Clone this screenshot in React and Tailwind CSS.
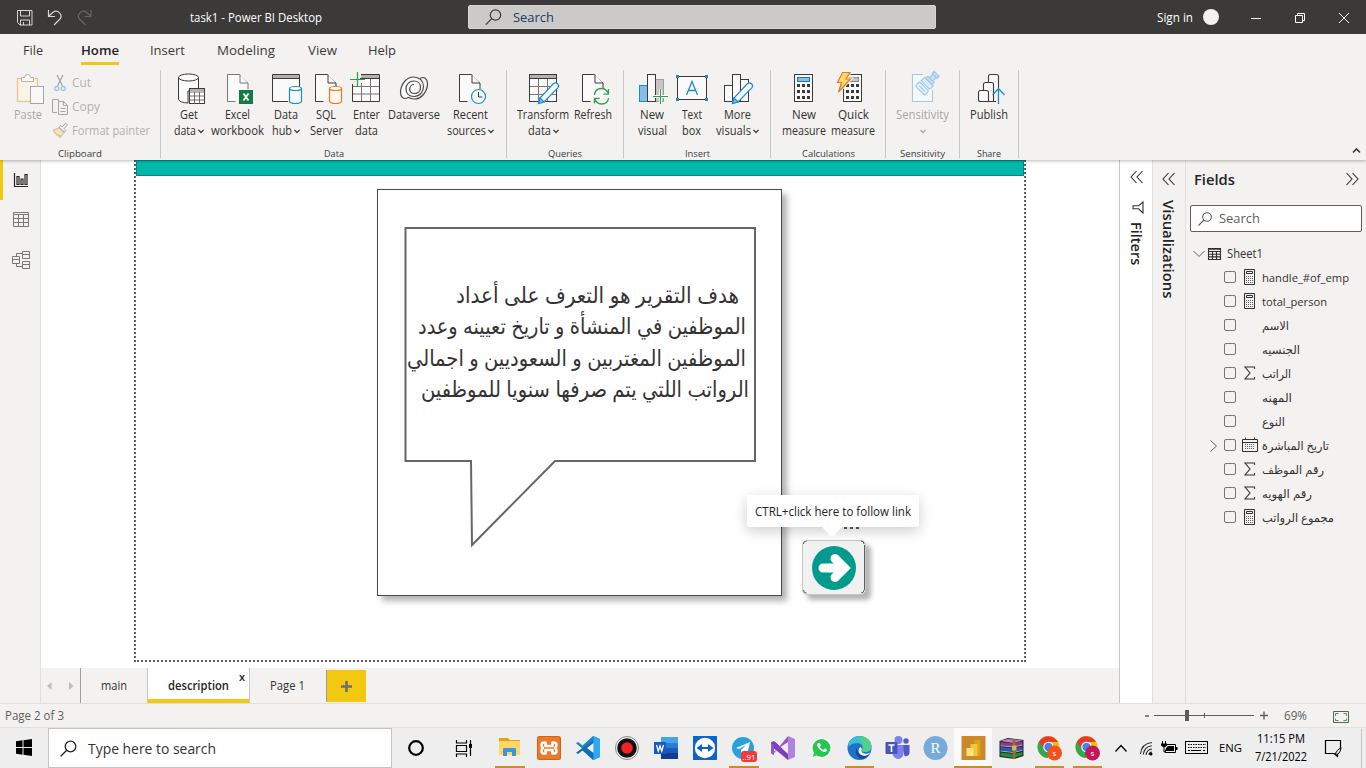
import { useLayoutEffect, useRef, useState } from "react";

/* Text squeezed or stretched to a given length in pixels. */
function Fit({ w, children, className = "", vertical = false, rtl = false }) {
  const ref = useRef(null);
  const [k, setK] = useState(1);
  useLayoutEffect(() => {
    const n = vertical ? ref.current.offsetHeight : ref.current.getBoundingClientRect().width;
    if (n) setK(w / n);
  }, []);
  if (vertical) {
    return (
      <span className={"block " + className} style={{ height: w }}>
        <span ref={ref} className="inline-block origin-top whitespace-nowrap [writing-mode:vertical-rl]" style={{ transform: `scaleY(${k})` }}>{children}</span>
      </span>
    );
  }
  return (
    <span className={"block shrink-0 " + className} style={{ width: w }}>
      <span ref={ref} dir={rtl ? "rtl" : "ltr"} className="inline-block origin-left whitespace-pre" style={{ transform: `scaleX(${k})` }}>{children}</span>
    </span>
  );
}

function Svg({ box, className = "", children }) {
  const [x, y, w, h] = box;
  return (
    <svg viewBox={`${x} ${y} ${w} ${h}`} width={w} height={h} className={"block shrink-0 overflow-visible " + className} fill="none" strokeLinecap="butt">
      {children}
    </svg>
  );
}

const Down = ({ c = "#3b3a39" }) => (
  <Svg box={[0, 0, 6, 5]} className="mt-[1px]"><path d="M.4 .9 3 3.500 5.600 .9" stroke={c} strokeWidth="1.300" /></Svg>
);

/* One large ribbon button; x is the left edge its drawing is laid out from. */
function Big({ x, w, l1, w1, l2, w2, arrow, dim, children }) {
  return (
    <div className={"flex shrink-0 flex-col items-center pt-[3px] " + (dim ? "text-[#a8a6a4]" : "text-[#323130]")} style={{ width: w }}>
      <Svg box={[x, 70, w, 36]}>{children}</Svg>
      <div className="flex h-4 w-0 items-center justify-center text-[12px] leading-4 mt-[1px]"><Fit w={w1}>{l1}</Fit></div>
      <div className="flex h-4 w-0 items-center justify-center gap-[2px] text-[12px] leading-4">
        {l2 && <Fit w={w2}>{l2}</Fit>}
        {arrow && <Down c={dim ? "#a8a6a4" : "#3b3a39"} />}
      </div>
    </div>
  );
}

function Group({ w, pl, label, lw, children }) {
  return (
    <div className="flex shrink-0 flex-col" style={{ width: w }}>
      <div className="flex h-[80px]" style={{ paddingLeft: pl }}>{children}</div>
      <div className="flex h-[13px] justify-center text-[9.7px] leading-[14px] text-[#3b3a39]"><Fit w={lw}>{label}</Fit></div>
    </div>
  );
}
const Sep = () => <div className="mt-[3px] h-[88px] w-px shrink-0 bg-[#c8c6c4]" />;

const D = "#3b3a39";
const B = "#1e8bcd";

const Page = ({ x, c = D }) => (
  <g stroke={c} fill="#fafafa"><path d={`M${x + 8} 101.5H${x}V74.5h12l8.5 8.5v6`} /><path d={`M${x + 12.5} 74.5V83h8`} /></g>
);
const Pencil = ({ x, y }) => (
  <g stroke={B} strokeWidth="1.2"><path d={`M${x} ${y}l1.5-5.5L${x + 15} ${y - 20}q2-1.5 4 .3t.3 4L${x + 5.5} ${y - 1.5}z`} fill="#f8fbfd" /><path d={`M${x} ${y}l1.5-5.5 4 4z`} fill="#83beec" /></g>
);
const Calc = ({ x }) => (
  <g>
    <rect x={x + 0.5} y="74.5" width="18" height="27" fill="#fafafa" stroke={D} />
    {[84, 90, 96].map((y) => [3, 8, 13].map((d) => <rect key={y + "-" + d} x={x + d} y={y} width="3" height="3" fill={D} />))}
  </g>
);

function TitleBar() {
  return (
    <div className="flex h-[34px] shrink-0 items-center bg-[#3b3a39] text-white">
      <Svg box={[0, 0, 190, 34]}>
        <g stroke="#d8d6d4">
          <path d="M17.500 10.500h14.500v14.500h-12l-2.500-2.500zM20.500 10.500v5.500h9v-5.500M20.500 25v-5h9v5M23.500 25v-3" />
          <path d="M48.500 10v6.500h6.500M48.700 16.300l4.300-4q3.500-2.500 6.500.5t.5 6.200l-6 6" strokeWidth="1.200" />
          <path d="M91 10v6.500h-6.500M90.800 16.300l-4.300-4q-3.500-2.500-6.500.5t-.5 6.200l6 6" strokeWidth="1.200" stroke="#686664" />
        </g>
      </Svg>
      <Fit w={132} className="pt-[2px] text-[12px]">task1 - Power BI Desktop</Fit>
      <div className="ml-[146px] flex h-6 w-[468px] shrink-0 items-center rounded-[2px] border border-[#d8d6d4] bg-[#cbcac8] pl-4">
        <Svg box={[0, 0, 17, 17]}><circle cx="10.500" cy="6" r="5.200" stroke="#3b3a39" strokeWidth="1.200" /><path d="M6.800 9.700.8 15.700" stroke="#3b3a39" strokeWidth="1.200" /></Svg>
        <Fit w={41} className="ml-[11px] text-[13.500px] leading-5 text-[#243a5e]">Search</Fit>
      </div>
      <Fit w={36} className="ml-[221px] pt-[2px] text-[12px]">Sign in</Fit>
      <div className="ml-[10px] size-4 shrink-0 rounded-full bg-[#f3f2f1]" />
      <Svg box={[1219, 0, 147, 34]}>
        <path d="M1251 18.500h10M1295.500 15.500h7v7h-7zM1297.500 15.500v-2h7v7h-2M1339 13l10 10M1349 13l-10 10" stroke="#fff" />
      </Svg>
    </div>
  );
}

function Menu() {
  const items = [["File", 20, 23], ["Home", 38, 38], ["Insert", 35, 31], ["Modeling", 58, 32], ["View", 29, 33], ["Help", 28, 31]];
  return (
    <div className="relative z-20 flex h-[33px] shrink-0 bg-[#f3f2f1] text-[13.300px] text-[#3b3a39]">
      {items.map(([t, w, ml]) => (
        <div key={t} className={"flex h-[31px] flex-col pt-[6px] leading-5 " + (t === "Home" ? "border-b-[3px] border-[#f2c811] font-semibold text-[#252423]" : "")} style={{ marginLeft: ml }}>
          <Fit w={w}>{t}</Fit>
        </div>
      ))}
    </div>
  );
}

function Ribbon() {
  return (
    <div className="relative z-10 flex h-[93px] shrink-0 bg-[#f3f2f1] shadow-[0_1px_3px_rgba(0,0,0,0.28)]">
      <Group w={160} pl={10} label="Clipboard" lw={44}>
        <Big x={10} w={36} l1="Paste" w1={28} dim>
          <rect x="17.500" y="78.500" width="20" height="23" fill="#faf3e6" stroke="#ecc793" strokeWidth="1.400" />
          <path d="M21.500 81.500v-4h3q0-3 3-3t3 3h3v4z" fill="#f8f8f8" stroke="#b3b1af" />
          <rect x="30.500" y="86.500" width="13" height="17" fill="#f8f8f8" stroke="#a8a6a4" />
        </Big>
        <div className="ml-[6px] flex flex-col pt-1 text-[12px] text-[#b3b1af]">
          <div className="flex h-6 items-center gap-1"><Svg box={[52, 74, 16, 16]}><path d="M57 74l5.500 11M63 74l-5.500 11" stroke="#a8a6a4" strokeWidth="1.300" /><circle cx="56.800" cy="87.500" r="2" stroke="#9cc6e2" strokeWidth="1.300" /><circle cx="63.200" cy="87.500" r="2" stroke="#9cc6e2" strokeWidth="1.300" /></Svg><Fit w={19}>Cut</Fit></div>
          <div className="flex h-6 items-center gap-1"><Svg box={[52, 98, 16, 16]}><path d="M57 111.500h-4.500v-13h6v2M58.500 100.500h5l4 4v9h-9zM63.500 100.500v4h4M60.500 107.500h5M60.500 110.500h5" stroke="#a8a6a4" /></Svg><Fit w={28}>Copy</Fit></div>
          <div className="flex h-6 items-center gap-1"><Svg box={[52, 122, 16, 16]}><path d="M53 129l6-2 5 4.500-4 5.500z" fill="#f6dfc4" stroke="#e3b78b" /><path d="M53 129l3 4.500 5 1.500" stroke="#e3b78b" /><path d="M59 126.500l5.500 5 1.300-2-1.800-1.800 3.500-3.700-1.700-1.700-3.800 3.500-1.500-1.300z" fill="#eee" stroke="#a8a6a4" /></Svg><Fit w={78}>Format painter</Fit></div>
        </div>
      </Group>
      <Sep />
      <Group w={345} pl={4} label="Data" lw={20}>
        <Big x={165} w={47} l1="Get" w1={18} l2="data" w2={22} arrow>
          <path d="M178.500 77.500v22q1 3 9.500 3.500V91h10.500V77.500" fill="#fafafa" stroke={D} />
          <ellipse cx="188.500" cy="77.500" rx="10" ry="3.500" fill="#fafafa" stroke={D} />
          <rect x="189.500" y="88.500" width="15" height="15" fill="#fff" stroke={D} /><path d="M190 90h14" stroke="#b3b1af" strokeWidth="2" /><path d="M189 92h16M189 96h16M189 100h16M194.500 92v12M199.500 92v12" stroke="#605e5c" strokeWidth=".9" />
        </Big>
        <Big x={212} w={51} l1="Excel" w1={25} l2="workbook" w2={53}>
          <Page x={227.5} c="#797775" /><rect x="239" y="90" width="14" height="14" fill="#107c41" />
          <path d="M243.500 93.500l5 7M248.500 93.500l-5 7" stroke="#fff" strokeWidth="1.800" />
        </Big>
        <Big x={263} w={45} l1="Data" w1={24} l2="hub" w2={20} arrow>
          <path d="M288 101.500h-15.500v-27h27V87" fill="#fafafa" stroke={D} /><path d="M273 76.500h26" stroke="#b3b1af" strokeWidth="3" /><path d="M272 78.500h28" stroke={D} />
          <path d="M289.500 88.500v13q1 2 6 2t6-2v-13" fill="#f4faff" stroke={B} strokeWidth="1.200" /><ellipse cx="295.500" cy="88.500" rx="6" ry="2" fill="#fff" stroke={B} strokeWidth="1.200" />
        </Big>
        <Big x={308} w={36} l1="SQL" w1={20} l2="Server" w2={33}>
          <Page x={315.5} /><path d="M329.500 88.500v13q1 2 6 2t6-2v-13" fill="#fff8f1" stroke="#e07b1c" strokeWidth="1.200" /><ellipse cx="335.500" cy="88.500" rx="6" ry="2" fill="#fff" stroke="#e07b1c" strokeWidth="1.200" />
        </Big>
        <Big x={344} w={44} l1="Enter" w1={27} l2="data" w2={23}>
          <path d="M352.500 84v17.500h27v-27H352.500z" fill="#fafafa" /><path d="M350 72h11v14h-11z" fill="#f3f2f1" /><path d="M361 76.500h18" stroke="#b3b1af" strokeWidth="3" />
          <path d="M352.500 84v17.500h27v-27H361M360 78.500h19" stroke={D} /><path d="M353 86.500h26M353 94h26M361.500 83v18M370.500 79v22" stroke="#797775" />
          <path d="M357.500 72v15M350 79.500h15" stroke="#2f9e4f" strokeWidth="1.200" />
        </Big>
        <Big x={388} w={52} l1="Dataverse" w1={52}>
          <g stroke="#4a4846" strokeWidth="1.200">
            <path d="M408 97.500c-4 2.500-7.500 0-7.500-5 0-8 6-15.500 13-15.500 6 0 10 4 10 9.500 0 5-3.500 10-9.500 10-5 0-8-3-8-7.500 0-5 3.500-8 8-8 4 0 6.500 2.700 6.500 6.500 0 3.500-2.500 6-6 6-3 0-4.800-2-4.800-4.500s2-4.500 4.300-4.500" fill="#fafafa" />
            <path d="M420 78.500c4-2.500 7.500 0 7.500 5 0 8-6 15.500-13 15.500-2.500 0-4.800-.6-6.500-1.700" />
          </g>
        </Big>
        <Big x={440} w={60} l1="Recent" w1={35} l2="sources" w2={39} arrow>
          <Page x={459.5} /><circle cx="478.500" cy="96.500" r="7" fill="#fafdff" stroke={B} strokeWidth="1.200" /><path d="M478.500 92v5h4" stroke={D} />
        </Big>
      </Group>
      <Sep />
      <Group w={116} pl={8} label="Queries" lw={34}>
        <Big x={515} w={56} l1="Transform" w1={52} l2="data" w2={23} arrow>
          <rect x="529.500" y="74.500" width="27" height="27" fill="#fafafa" stroke={D} /><path d="M530 76.500h26" stroke="#b3b1af" strokeWidth="3" /><path d="M529 78.500h28" stroke={D} /><path d="M530 86.500h26M530 94.500h26M538.500 79v22M547.500 79v22" stroke="#797775" />
          <Pencil x={538.5} y={103.5} />
        </Big>
        <Big x={571} w={44} l1="Refresh" w1={38}>
          <Page x={582.5} /><path d="M594 88h16v16h-16z" fill="#f8f8f8" /><path d="M594.500 95q.5-6.500 7-6.500 5 0 7 5.500M608.500 89v5.200h-5.200M608.500 98q-.5 6-7 6-5 0-7-5.500M594.500 103.500v-5.200h5.200" stroke="#2f9e4f" strokeWidth="1.300" />
        </Big>
      </Group>
      <Sep />
      <Group w={146} pl={9} label="Insert" lw={25}>
        <Big x={633} w={38} l1="New" w1={24} l2="visual" w2={29}>
          <rect x="639.500" y="85.500" width="8" height="16" fill="#83beec" stroke={B} /><rect x="655.500" y="79.500" width="8" height="22" fill="#c8c6c4" stroke="#a19f9d" /><rect x="647.500" y="74.500" width="8" height="27" fill="#fafafa" stroke={D} />
          <path d="M660.500 89v15M653 96.500h15" stroke="#fff" strokeWidth="3" /><path d="M660.500 89v15M653 96.500h15" stroke="#2f9e4f" strokeWidth="1.200" />
        </Big>
        <Big x={671} w={41} l1="Text" w1={20} l2="box" w2={19}>
          <rect x="677.500" y="76.500" width="29" height="23" fill="#fafafa" stroke={D} />
          {[[676, 75], [705, 75], [676, 98], [705, 98]].map(([x, y]) => <rect key={x + "-" + y} x={x} y={y} width="3" height="3" fill={B} />)}
          <path d="M686.500 95l5.500-13.500 5.500 13.500M688.300 90.500h7.400" stroke={B} strokeWidth="1.300" />
        </Big>
        <Big x={712} w={50} l1="More" w1={27} l2="visuals" w2={35} arrow>
          <rect x="724.500" y="85.500" width="8" height="16" fill="#fafafa" stroke={D} /><rect x="740.500" y="79.500" width="8" height="22" fill="#fafafa" stroke={D} /><rect x="732.500" y="74.500" width="8" height="27" fill="#fafafa" stroke={D} /><Pencil x={732.5} y={103.5} />
        </Big>
      </Group>
      <Sep />
      <Group w={114} pl={8} label="Calculations" lw={53}>
        <Big x={779} w={50} l1="New" w1={24} l2="measure" w2={44}>
          <Calc x={794} /><rect x="797.500" y="77.500" width="12" height="4" fill="#83beec" stroke="#1a73b5" />
        </Big>
        <Big x={829} w={48} l1="Quick" w1={31} l2="measure" w2={44}>
          <Calc x={843} /><rect x="848.500" y="77.500" width="10" height="4" fill="#c8c6c4" stroke="#8a8886" />
          <path d="M842.500 72.500h7.500l-4 6.500h4.500l-12 13 3-9.500h-4z" fill="#fcd778" stroke="#f3f2f1" strokeWidth="3" />
          <path d="M842.500 72.500h7.500l-4 6.500h4.500l-12 13 3-9.500h-4z" fill="#fcd778" stroke="#e07b1c" strokeWidth="1.200" />
        </Big>
      </Group>
      <Sep />
      <Group w={73} pl={8} label="Sensitivity" lw={45}>
        <Big x={894} w={57} l1="Sensitivity" w1={53} arrow dim>
          <g stroke="#a0c9e2" strokeWidth="1.100">
            <path d="M923 74.500h-10.500v27h20V90" fill="#f5f8fa" />
            <g transform="rotate(-45 922 88.500)"><rect x="919" y="82" width="6" height="13" rx="1" fill="#e7f1f8" /><path d="M922 84.500v8" /></g>
            <g transform="rotate(45 930 80.500)"><path d="M924 82h12v5h-12z" fill="#dcebf5" /><path d="M925.500 79h9v3h-9zM927.500 79v-5h5v5M926.500 71h7v3h-7z" fill="#c6dff0" /></g>
          </g>
        </Big>
      </Group>
      <Sep />
      <Group w={58} pl={4} label="Share" lw={24}>
        <Big x={964} w={50} l1="Publish" w1={38}>
          <g fill="#fafafa" stroke={D} strokeWidth="1.100"><path d="M988.500 101.500v-25q0-2 2-2h6q2 0 2 2V88" /><path d="M983.500 101.500v-17q0-2 2-2h6q2 0 2 2v17z" /><path d="M978.500 99.500v-7q0-2 2-2h6q2 0 2 2v9h-8q-2 0-2-2zM988 101.500h8" /></g>
          <path d="M998.500 104V89M992.500 95l6-6.500 6 6.500" stroke={B} strokeWidth="1.300" />
        </Big>
      </Group>
      <Sep />
      <Svg box={[1019, 67, 347, 93]}><path d="M1353 152.500l3.500-3.500 3.500 3.500" stroke={D} strokeWidth="1.700" /></Svg>
    </div>
  );
}

function Rail() {
  return (
    <div className="flex w-[41px] shrink-0 border-r border-[#e1dfdd] bg-[#f3f2f1]">
      <div className="h-10 w-[3px] shrink-0 bg-[#f2c811]" />
      <Svg box={[3, 160, 37, 140]}>
        <path d="M14.500 173v13.500H28M17 176.500h2v8h-2zM21 179h2v5.500h-2zM25 174.500h2v10h-2z" stroke="#252423" strokeWidth="1.200" />
        <path d="M13.500 212.500h15v14h-15zM13 214.500h16M13 218.500h16M13 222.500h16M18.500 214v12M23.500 214v12" stroke="#797775" />
        <path d="M12.500 256.500h7v7h-7zM12 259.500h8M22.500 251.500h7v7h-7zM22 254.500h8M22.500 261.500h7v7h-7zM22 264.500h8M16.500 256v-2.500h6M16.500 264v2.500h6" stroke="#797775" />
      </Svg>
    </div>
  );
}

const lines = [
  ["هدف التقرير هو التعرف على أعداد", 283, 79],
  ["الموظفين في المنشأة و تاريخ تعيينه وعدد", 328, 41],
  ["الموظفين المغتربين و السعوديين و اجمالي", 339, 30],
  ["الرواتب اللتي يتم صرفها سنويا للموظفين", 328, 44],
];

function Canvas() {
  return (
    <div className="relative h-[508px] shrink-0 overflow-hidden bg-white">
      <div className="ml-[93px] -mt-4 h-[518px] w-[892px] border-2 border-dotted border-[#605e5c]">
        <div className="mt-[14px] h-4 border border-[#018a80] bg-[#01b8aa]" />
      </div>
      <div className="absolute left-[336px] top-[29px] h-[407px] w-[405px] border border-[#4a4846] bg-white shadow-[5px_5px_6px_rgba(0,0,0,0.3)]">
        <Svg box={[378, 190, 403, 405]} className="absolute left-0 top-0">
          <path d="M405.500 228H755v233H555l-83 84-1-84h-65.500z" stroke="#666" strokeWidth="2" />
        </Svg>
        <div className="relative pt-[90px] text-[22px] leading-[31.300px] text-[#333] font-[Liberation_Sans,DejaVu_Sans,sans-serif]">
          {lines.map(([t, w, ml]) => (
            <div key={t} className="h-[31.3px]" style={{ marginLeft: ml - 1 }}><Fit w={w} rtl>{t}</Fit></div>
          ))}
        </div>
      </div>
      <div className="absolute left-[761px] top-[380px] flex h-[55px] w-[64px] items-center justify-center rounded-[5px] border border-[#c8c6c4] bg-[#f1f1f1] shadow-[5px_5px_5px_rgba(0,0,0,0.3)]">
        <Svg box={[802, 540, 64, 55]} className="-m-px">
          <circle cx="834" cy="568" r="22" fill="#009b8d" />
          <path d="M823 568H842M835 558.500l9.500 9.500-9.500 9.500" stroke="#fff" strokeWidth="9" strokeLinecap="round" strokeLinejoin="miter" />
          <path d="M803.500 544q0-3 3-3M861 541q3 0 3 3M803.500 590q0 3 3 3M861 593q3 0 3-3M864.500 545v45" stroke="#605e5c" />
        </Svg>
      </div>
      <div className="absolute left-[803px] top-[366px] flex gap-[3px]">
        <i className="size-[3px] bg-[#605e5c]" /><i className="size-[3px] bg-[#605e5c]" /><i className="size-[3px] bg-[#605e5c]" />
      </div>
      <div className="absolute left-[706px] top-[335px] flex h-8 w-[172px] items-center rounded-[2px] bg-white pl-2 pt-[2px] text-[11.700px] text-[#252423] shadow-[0_4px_14px_rgba(0,0,0,0.2)]">
        <Fit w={156}>CTRL+click here to follow link</Fit>
        <Svg box={[0, 0, 20, 10]} className="absolute left-[75px] top-[32px]"><path d="M0 0h20l-8 8.500q-2 1.500-4 0z" fill="#fff" /></Svg>
      </div>
    </div>
  );
}

function PageTabs() {
  return (
    <div className="flex h-[35px] shrink-0 bg-[#f3f2f1] text-[12px] text-[#323130]">
      <Svg box={[41, 668, 39, 35]}><path d="M51.500 682v8l-4.500-4zM69 682v8l4.500-4z" fill="#c0bebc" /></Svg>
      <div className="flex w-[67px] items-center justify-center border-l border-[#a19f9d]"><Fit w={26}>main</Fit></div>
      <div className="relative flex w-[103px] items-center justify-center border-x border-b-4 border-x-[#c8c6c4] border-b-[#f2c811] bg-white pt-1 font-semibold text-[#252423]">
        <Fit w={61}>description</Fit>
        <span className="absolute right-[4px] top-[1px] text-[11px] leading-4">x</span>
      </div>
      <div className="flex w-[76px] items-center justify-center pr-[2px]"><Fit w={35}>Page 1</Fit></div>
      <div className="mt-[2px] flex h-8 w-[40px] items-center justify-center border-l border-[#a19f9d] bg-[#f2c811]">
        <Svg box={[0, 0, 11, 11]}><path d="M5.500 0v11M0 5.500h11" stroke="#6f6d6b" strokeWidth="2.600" /></Svg>
      </div>
    </div>
  );
}

const CalcSmall = () => <Svg box={[0, 0, 16, 16]}><path d="M2.500.5h10v15h-10zM4.500 2.500h6v2h-6z" stroke="#323130" /><path d="M4 7.500h7M4 9.500h7M4 11.500h7M4 13.500h7" stroke="#605e5c" strokeDasharray="1 1" /></Svg>;
const Sigma = () => <Svg box={[0, 0, 16, 16]}><path d="M12.500 4V2H3l5 6-5 6h9.500v-2" stroke="#323130" strokeWidth="1.100" /></Svg>;
const Cal = () => <Svg box={[0, 0, 16, 16]}><path d="M.5 2.500h15v12H.5zM.5 5.500h15M3.500.5v2M12.500 .5v2" stroke="#323130" /><path d="M3 7.500h10M3 9.500h10M3 11.500h10" stroke="#605e5c" strokeDasharray="1 1" /></Svg>;

const fields = [
  ["handle_#of_emp", 87, "c"], ["total_person", 65, "c"], ["الاسم", 27], ["الجنسيه", 38], ["الراتب", 29, "s"], ["المهنه", 30],
  ["النوع", 23], ["تاريخ المباشرة", 67, "d"], ["رقم الموظف", 62, "s"], ["رقم الهويه", 50, "s"], ["مجموع الرواتب", 72, "c"],
];

function Panes() {
  const chev = "M6.500 1 1 7l5.500 6M12.500 1 7 7l5.500 6";
  return (
    <>
      <div className="flex w-[34px] shrink-0 flex-col border-x border-l-[#c8c6c4] border-r-[#e1dfdd] bg-white pl-[10px] pt-[10px] text-[#252423]">
        <Svg box={[0, 0, 14, 14]}><path d={chev} stroke="#323130" strokeWidth="1.100" /></Svg>
        <Svg box={[1132, 202, 12, 12]} className="mt-[18px] ml-[2px]"><path d="M1143 202v11l-4.500-4.200h-5.500v-3h5.500z" stroke="#323130" strokeWidth="1.100" /></Svg>
        <Fit vertical w={43} className="-ml-[4px] mt-[8px] text-[13.500px] leading-5 font-semibold">Filters</Fit>
      </div>
      <div className="flex w-[33px] shrink-0 flex-col border-r border-[#e1dfdd] bg-[#f3f2f1] pl-[9px] pt-3 text-[#252423]">
        <Svg box={[0, 0, 14, 14]}><path d={chev} stroke="#323130" strokeWidth="1.100" /></Svg>
        <Fit vertical w={98} className="-ml-[4px] mt-[14px] text-[13.500px] leading-5 font-semibold">Visualizations</Fit>
      </div>
      <div className="flex w-[180px] shrink-0 flex-col bg-[#f3f2f1] pl-1 pt-[9px] text-[#323130]">
        <div className="flex h-5 items-center pl-1">
          <Fit w={41} className="text-[14px] font-semibold text-[#252423]">Fields</Fit>
          <Svg box={[0, 0, 14, 14]} className="ml-[110px] rotate-180"><path d={chev} stroke="#323130" strokeWidth="1.100" /></Svg>
        </div>
        <div className="mt-4 flex h-[27px] w-[172px] items-center rounded-[2px] border border-[#605e5c] bg-white pl-[7px]">
          <Svg box={[0, 0, 14, 14]}><circle cx="9" cy="5" r="4.300" stroke="#605e5c" strokeWidth="1.100" /><path d="M6 8 .5 13.500" stroke="#605e5c" strokeWidth="1.100" /></Svg>
          <Fit w={41} className="ml-[7px] pt-[2px] text-[12.500px] text-[#605e5c]">Search</Fit>
        </div>
        <div className="mt-[10px] flex h-6 items-center text-[12px]">
          <Svg box={[0, 0, 35, 16]}><path d="M3.500 5 9 10.500l5.500-5.500" stroke="#605e5c" /><path d="M18.500 2.500h12v11h-12zM18 5.500h13M18 8.200h13M18 10.900h13M22.500 5v8M26.500 5v8" stroke="#323130" strokeWidth="1.100" /><path d="M18 3h13" stroke="#323130" strokeWidth="1.500" /></Svg>
          <Fit w={36} className="ml-[2px]">Sheet1</Fit>
        </div>
        {fields.map(([t, w, k]) => (
          <div key={t} className="flex h-6 items-center text-[11.500px]">
            <div className="w-[34px] pl-[19px]">{k === "d" && <Svg box={[0, 0, 8, 12]}><path d="M1.500 .5 7.500 6l-6 5.500" stroke="#605e5c" /></Svg>}</div>
            <div className="mb-[2px] size-3 shrink-0 rounded-[2px] border border-[#797775]" />
            <div className="ml-[6px] mb-[2px] w-4 shrink-0">{k === "c" ? <CalcSmall /> : k === "s" ? <Sigma /> : k === "d" ? <Cal /> : null}</div>
            <Fit w={w} rtl={t.charCodeAt(0) > 1000} className="ml-1">{t}</Fit>
          </div>
        ))}
      </div>
    </>
  );
}

function Status() {
  return (
    <div className="flex h-6 shrink-0 items-center border-t border-[#e1dfdd] bg-[#f3f2f1] pl-[5px] text-[11.700px] text-[#605e5c]">
      <Fit w={59}>Page 2 of 3</Fit>
      <Svg box={[1145, 704, 125, 23]} className="ml-[1081px]"><path d="M1145 716h4M1260 715.500h8M1264 711.500v8" stroke="#605e5c" strokeWidth="1.400" /><path d="M1154 715.500h100M1204.500 713v5" stroke="#605e5c" /><path d="M1187 710v11" stroke="#605e5c" strokeWidth="4" /></Svg>
      <Fit w={23} className="ml-[14px]">69%</Fit>
      <Svg box={[1333, 704, 17, 23]} className="ml-[26px]"><path d="M1333.500 711.500h15v11h-15z" stroke="#605e5c" /><path d="M1335.500 716v-2.500h3M1343.500 713.500h3v2.500M1346.500 718.500v2h-3M1338.500 720.500h-3v-2" stroke="#3f9a54" /></Svg>
    </div>
  );
}

const Chrome = ({ c }) => (
  <>
    <circle cx="11" cy="11" r="11" fill="#fbbc05" />
    <path d="M11 11 1.500 5.500A11 11 0 0 0 10 22l5.500-9z" fill="#2da94f" />
    <path d="M11 6h9.500A11 11 0 0 0 1.500 5.500L6 13z" fill="#e33b2e" />
    <circle cx="11" cy="11" r="5.300" fill="#fff" /><circle cx="11" cy="11" r="4.200" fill="#3f86ed" />
    <circle cx="17" cy="17" r="7.500" fill={c} /><text x="17" y="20" fontSize="8" fill="#fff" textAnchor="middle" fontFamily="Open Sans">s</text>
  </>
);

const apps = [
  [39, 30, <g key="a"><path d="M1 2h9l2 2h10v15H1z" fill="#e0a50a" /><path d="M1 5h21v14H1z" fill="#ffd767" /><path d="M5 20v-7q0-1 1-1h11q1 0 1 1v7h-4v-4H9v4z" fill="#3c96dc" /></g>],
  [39, 0, <g key="a"><rect width="24" height="24" rx="2.500" fill="#d5621a" /><rect x="1" y="1" width="22" height="22" rx="2" fill="#ea7b2b" /><path d="M8.500 9.500V6.500q-4-.5-4 2.500 0 2 1.500 3-1.500 1-1.500 3 0 3 4 2.500v-3.500h7v3.500q4 .5 4-2.500 0-2-1.500-3 1.500-1 1.500-3 0-3-4-2.500v3.500h-7z" stroke="#fff" strokeWidth="2.600" strokeLinejoin="round" /></g>],
  [39, 0, <g key="a"><path d="M17 0 6.500 9.500 2 6 0 7.200 15 20l2.500 4L24 21V3z" fill="#1b86ce" /><path d="M17 24 6.500 14.500 2 18 0 16.800 17.500 4V0z" fill="#0c70b5" /><path d="M17.500 0 24 3v18l-6.500 3z" fill="#2ba9f2" /><path d="M17.500 7v10L11 12z" fill="#eee" /></g>],
  [39, 0, <g key="a"><circle cx="12" cy="12" r="11.500" fill="#f3f3f3" stroke="#888" /><circle cx="12" cy="12" r="9.800" fill="#111" /><circle cx="12" cy="12" r="5.800" fill="#f02222" /></g>],
  [39, 0, <g key="a"><path d="M7 1h17v6H7z" fill="#41a5ee" /><path d="M7 7h17v5H7z" fill="#2b7cd3" /><path d="M7 12h17v5H7z" fill="#185abd" /><path d="M7 17h17v6H7z" fill="#103f91" /><path d="M0 6h12v12H0z" fill="#185abd" /><path d="M2.500 9l1.800 6L6 10l1.700 5 1.800-6" stroke="#fff" strokeWidth="1.300" /></g>],
  [39, 0, <g key="a"><rect width="24" height="24" fill="#0d63cc" /><circle cx="12" cy="12" r="10.200" fill="#fff" /><path d="M3.500 12 9 8v3h6V8l5.500 4-5.500 4v-3H9v3z" fill="#0d63cc" /></g>],
  [39, 30, <g key="a"><circle cx="11" cy="12" r="11" fill="#2aa1dc" /><path d="M4 12 18 6l-3 13-4-3-2 2v-4l5-5-7 4z" fill="#fff" /><rect x="9" y="15" width="16" height="11" rx="3" fill="#f13c3c" /><text x="17" y="23.500" fontSize="8" fill="#fff" textAnchor="middle" fontFamily="Open Sans">..91</text></g>],
  [39, 0, <g key="a"><path d="M0 6.500 2.500 5 5 6.500 17 18v6L3 12.500V19l-3-2z" fill="#7a3fba" /><path d="M0 17V7l3 2v6.500L17 6V0L2 18.500z" fill="#9257cf" /><path d="M17 0l7 3v18l-7 3z" fill="#b083e2" /><path d="M17 7v10l-6-5z" fill="#eee" /></g>],
  [38, 0, <g key="a"><circle cx="12" cy="12" r="10.500" fill="#fff" /><path d="M1.500 22.500 4 15l5 5z" fill="#fff" /><circle cx="12" cy="12" r="9" fill="#25c84d" /><path d="M3 21l2-5 3 3z" fill="#25c84d" /><path d="M8.500 7q-2 2 .5 5t5.500 4q2 .3 3-1.500l-.3-1-2-1-1.500 1.500q-2.200-1-3.400-3.300l1-1.200-1-2.500z" fill="#fff" /></g>],
  [38, 29, <g key="a"><circle cx="12" cy="12" r="12" fill="#1b74c9" /><path d="M1 8Q4 0 12 0q11 1 12 10 0 6-7 6-4 0-2-3 1-5-5-6-6 0-9 4z" fill="#3cbfd6" /><path d="M13 0q10 1 11 10 0 6-7 6-4 0-2-3 1.500-4-2-8z" fill="#58d66d" opacity=".75" /><path d="M9 12q-3 9 6 11 4-1 6.500-4Q12 22 9 12z" fill="#0c4e94" /><path d="M14.500 13q-2 3 2.500 4.500 4 .5 6-1-2 3-6 3.500-6-1-6-5 0-3 2-4z" fill="#efefef" /></g>],
  [38, 0, <g key="a"><circle cx="13" cy="4" r="4" fill="#7b83eb" /><circle cx="20.500" cy="5" r="2.700" fill="#5059c9" /><path d="M16 9h8v8q-1 4-5 3z" fill="#5059c9" /><path d="M7 9h11v9q-1 5-6 5-4-1-5-5z" fill="#7b83eb" /><rect y="6" width="12" height="12" rx="1" fill="#4b53bc" /><path d="M3 9h6M6 9v7" stroke="#fff" strokeWidth="1.600" /></g>],
  [38, 0, <g key="a"><circle cx="12" cy="12" r="12" fill="#75aadb" /><text x="12" y="17" fontSize="15" fill="#fff" textAnchor="middle" fontFamily="Liberation Serif">R</text></g>],
  [38, 38, <g key="a"><rect width="24" height="24" fill="#cb882d" /><rect x="13" y="4" width="6" height="16" rx=".7" fill="#dba511" /><rect x="9" y="8" width="7" height="12" rx=".7" fill="#efc63c" /><rect x="5" y="12" width="7" height="8" rx=".7" fill="#ffe37f" /></g>],
  [38, 0, <g key="a"><path d="M0 5 8 2l16 2v16l-9 3L0 21z" fill="#2b2030" /><path d="M1 5 8 3l15 1.500L14 7z" fill="#c77fc4" /><path d="M1 6l13 1.500 9-2.500v3.500l-9 2L1 9z" fill="#8e3c8a" /><path d="M1 11l13 1.500 9-2v3l-9 2.300-13-1.500z" fill="#2857c8" /><path d="M1 16.500l13 1.500 9-2V19l-9 3-13-2z" fill="#1c9040" /><path d="M1 9.700l13 1.300 9-2M1 15l13 1.500 9-2.300" stroke="#d7d7c8" strokeWidth=".8" /><path d="M13 2.700l3 .3v20h-2.500z" fill="#9a6a2c" /><rect x="12.500" y="9.500" width="4.500" height="5" fill="#d9b45a" /></g>],
  [38, 29, <Chrome key="a" c="#f4511e" />],
  [38, 29, <Chrome key="a" c="#c2185b" />],
];

function Taskbar() {
  return (
    <div className="flex h-[41px] shrink-0 border-t border-[#e1dfdd] bg-[#eeeeee] text-black">
      <Svg box={[0, 728, 48, 40]}><path d="M16 741.200l6.500-.9v6.700H16zM23.500 740.200l8.500-1.200v8h-8.500zM16 748h6.500v6.700l-6.500-.9zM23.500 748h8.500v8l-8.500-1.200z" fill="#000" /></Svg>
      <div className="flex w-[344px] shrink-0 items-center border border-[#c4c4c4] bg-white pl-[11px]">
        <Svg box={[0, 0, 17, 17]}><circle cx="10.500" cy="6.500" r="5.300" stroke="#222" strokeWidth="1.300" /><path d="M6.700 10.300.7 16.300" stroke="#222" strokeWidth="1.300" /></Svg>
        <Fit w={128} className="ml-[11px] pt-[1px] text-[14.300px] text-[#333]">Type here to search</Fit>
      </div>
      <Svg box={[392, 728, 98, 40]}>
        <circle cx="416" cy="748" r="6.800" stroke="#000" strokeWidth="2.200" />
        <path d="M456.500 740v3h10v-3M456.500 745.500h10v6h-10zM456.500 757v-3h10v3M470.500 740v16" stroke="#000" strokeWidth="1.200" /><rect x="469" y="744" width="3" height="4" fill="#000" />
      </Svg>
      {apps.map(([w, u, icon], i) => (
        <div key={i} className={"flex shrink-0 flex-col items-center justify-between " + (i === 12 ? "bg-[#fafafa]" : "") + (w === 39 ? " pl-px" : "")} style={{ width: w }}>
          <Svg box={[0, 0, 24, 24]} className={"mt-2" + (w === 38 ? " translate-x-[0.5px]" : "")}>{icon}</Svg>
          <div className={"h-[2px] " + (u ? "bg-[#cf8a2c]" : "")} style={{ width: u }} />
        </div>
      ))}
      <Svg box={[1106, 728, 112, 40]}>
        <path d="M1115.500 751.500l5.500-6 5.500 6" stroke="#000" strokeWidth="1.300" />
        <g stroke="#222" strokeWidth="1.100"><path d="M1140.500 754q1-10.500 11.500-11.500M1143.300 754.500q1-8 8.500-8.800M1146 755q.8-5.500 6-6M1149 755q0-3 3-3" /></g><circle cx="1151" cy="754" r="1.500" fill="#000" />
        <path d="M1166.500 744.500h9v8h-10v-3" stroke="#000" /><path d="M1168 746h6v5h-8v-3zM1176 747h1.500v3h-1.500z" fill="#000" /><path d="M1162.500 741v3M1165.500 741v3M1164 747v5h2" stroke="#000" /><path d="M1161 743.500h6v2q-3 3.500-6 0z" fill="#000" />
        <rect x="1185.500" y="741.500" width="22" height="12" stroke="#000" /><path d="M1188 744.500h18M1188 747.500h18" stroke="#000" strokeDasharray="1.500 1" /><path d="M1188 750.500h2M1191 750.500h10M1203 750.500h2" stroke="#000" />
      </Svg>
      <div className="flex items-center pl-[1px] text-[11.500px]"><Fit w={23}>ENG</Fit></div>
      <div className="ml-[12px] flex w-[54px] shrink-0 flex-col items-center pt-[1px] text-[11.800px] leading-[18px]">
        <Fit w={48}>11:15 PM</Fit>
        <Fit w={52}>7/21/2022</Fit>
      </div>
      <Svg box={[1308, 728, 58, 40]}><path d="M1334 753.500h-8.500v-13h15v9M1334 753.500l3.500 3v-3" stroke="#000" strokeWidth="1.200" /><path d="M1341 747.500q-1 8-6 6.500 2-4 6-6.500z" fill="#eee" stroke="#000" /><path d="M1361.500 729v39" stroke="#c4c4c4" /></Svg>
    </div>
  );
}

export default function App() {
  return (
    <div className="flex h-[768px] w-[1366px] flex-col overflow-hidden bg-[#f3f2f1] font-[Open_Sans,Noto_Sans,DejaVu_Sans,sans-serif]">
      <TitleBar />
      <Menu />
      <Ribbon />
      <div className="flex h-[543px] shrink-0">
        <Rail />
        <div className="flex w-[1078px] shrink-0 flex-col">
          <Canvas />
          <PageTabs />
        </div>
        <Panes />
      </div>
      <Status />
      <Taskbar />
    </div>
  );
}
